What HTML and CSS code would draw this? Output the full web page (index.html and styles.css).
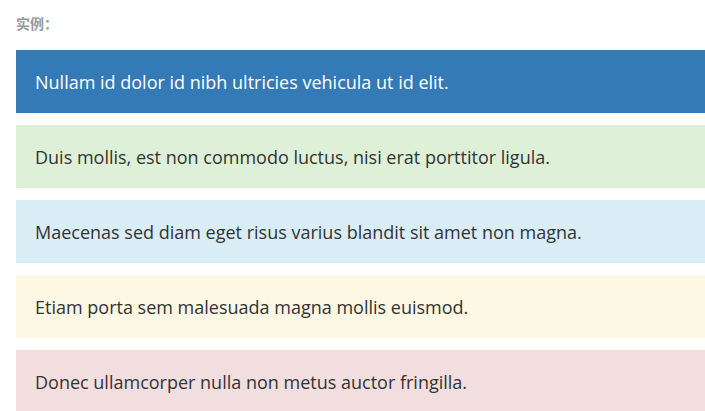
FILE: index.html
```html
<!DOCTYPE html>
<html lang="zh">
<head>
<meta charset="utf-8">
<link rel="stylesheet" href="styles.css">
</head>
<body>
<div class="page">
  <div class="label">实例：</div>
  <div class="list">
    <p class="box primary">Nullam id dolor id nibh ultricies vehicula ut id elit.</p>
    <p class="box success">Duis mollis, est non commodo luctus, nisi erat porttitor ligula.</p>
    <p class="box info">Maecenas sed diam eget risus varius blandit sit amet non magna.</p>
    <p class="box warning">Etiam porta sem malesuada magna mollis euismod.</p>
    <p class="box danger">Donec ullamcorper nulla non metus auctor fringilla.</p>
  </div>
</div>
</body>
</html>
```
FILE: styles.css
```css
html, body {
  margin: 0;
  padding: 0;
  background: #fff;
  overflow: hidden;
}
.page {
  padding: 13px 0 0 16px;
}
.label {
  font-family: "Noto Sans CJK SC", "Noto Sans", sans-serif;
  font-weight: bold;
  font-size: 14px;
  line-height: 20px;
  color: #999;
  height: 22px;
}
.list {
  display: flex;
  flex-direction: column;
  gap: 12px;
  margin-top: 15px;
}
.box {
  margin: 0;
  height: 63px;
  display: flex;
  align-items: center;
  padding: 0 19px;
  font-family: "Open Sans", "Noto Sans", sans-serif;
  font-size: 18px;
  color: #333;
}
.primary { background: #337ab7; color: #fff; }
.success { background: #dff0d8; }
.info { background: #d9edf7; }
.warning { background: #fcf8e3; }
.danger { background: #f2dede; }
```
